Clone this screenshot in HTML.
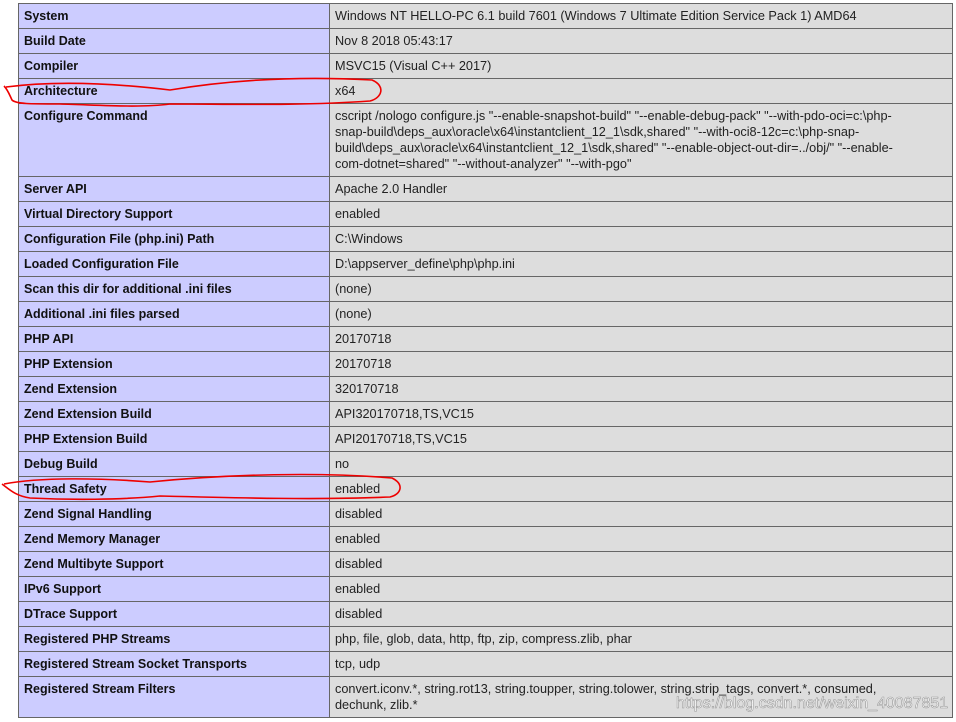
<!DOCTYPE html>
<html><head><meta charset="utf-8"><style>
body{margin:0;background:#fff;width:956px;height:722px;position:relative;overflow:hidden;font-family:"Liberation Sans","Noto Sans CJK SC",sans-serif;font-size:12.5px;color:#222}
table{position:absolute;left:18px;top:3px;width:935px;border-collapse:collapse}
td{border:1px solid #666;padding:0 5px;height:24px;line-height:16px;vertical-align:middle}
td.e{background:#ccf;font-weight:bold;width:300px;color:#111}
td.v{background:#ddd;font-size:12.7px;white-space:nowrap}
tr.t td{vertical-align:top;padding-top:4px;padding-bottom:4px;height:auto}
</style></head><body>
<table>
<tr><td class="e">System</td><td class="v">Windows NT HELLO-PC 6.1 build 7601 (Windows 7 Ultimate Edition Service Pack 1) AMD64</td></tr>
<tr><td class="e">Build Date</td><td class="v">Nov 8 2018 05:43:17</td></tr>
<tr><td class="e">Compiler</td><td class="v">MSVC15 (Visual C++ 2017)</td></tr>
<tr><td class="e">Architecture</td><td class="v">x64</td></tr>
<tr class="t"><td class="e" style="height:64px">Configure Command</td><td class="v">cscript /nologo configure.js "--enable-snapshot-build" "--enable-debug-pack" "--with-pdo-oci=c:\php-<br>snap-build\deps_aux\oracle\x64\instantclient_12_1\sdk,shared" "--with-oci8-12c=c:\php-snap-<br>build\deps_aux\oracle\x64\instantclient_12_1\sdk,shared" "--enable-object-out-dir=../obj/" "--enable-<br>com-dotnet=shared" "--without-analyzer" "--with-pgo"</td></tr>
<tr><td class="e">Server API</td><td class="v">Apache 2.0 Handler</td></tr>
<tr><td class="e">Virtual Directory Support</td><td class="v">enabled</td></tr>
<tr><td class="e">Configuration File (php.ini) Path</td><td class="v">C:\Windows</td></tr>
<tr><td class="e">Loaded Configuration File</td><td class="v">D:\appserver_define\php\php.ini</td></tr>
<tr><td class="e">Scan this dir for additional .ini files</td><td class="v">(none)</td></tr>
<tr><td class="e">Additional .ini files parsed</td><td class="v">(none)</td></tr>
<tr><td class="e">PHP API</td><td class="v">20170718</td></tr>
<tr><td class="e">PHP Extension</td><td class="v">20170718</td></tr>
<tr><td class="e">Zend Extension</td><td class="v">320170718</td></tr>
<tr><td class="e">Zend Extension Build</td><td class="v">API320170718,TS,VC15</td></tr>
<tr><td class="e">PHP Extension Build</td><td class="v">API20170718,TS,VC15</td></tr>
<tr><td class="e">Debug Build</td><td class="v">no</td></tr>
<tr><td class="e">Thread Safety</td><td class="v">enabled</td></tr>
<tr><td class="e">Zend Signal Handling</td><td class="v">disabled</td></tr>
<tr><td class="e">Zend Memory Manager</td><td class="v">enabled</td></tr>
<tr><td class="e">Zend Multibyte Support</td><td class="v">disabled</td></tr>
<tr><td class="e">IPv6 Support</td><td class="v">enabled</td></tr>
<tr><td class="e">DTrace Support</td><td class="v">disabled</td></tr>
<tr><td class="e">Registered PHP Streams</td><td class="v">php, file, glob, data, http, ftp, zip, compress.zlib, phar</td></tr>
<tr><td class="e">Registered Stream Socket Transports</td><td class="v">tcp, udp</td></tr>
<tr class="t"><td class="e" style="height:32px">Registered Stream Filters</td><td class="v">convert.iconv.*, string.rot13, string.toupper, string.tolower, string.strip_tags, convert.*, consumed,<br>dechunk, zlib.*</td></tr>
</table>
<svg style="position:absolute;left:0;top:0" width="956" height="722">
<path d="M6,87 C60,80 120,84 170,90 C230,80 300,76 372,80 C386,86 382,98 370,101 C300,106 230,104 170,104 C140,108 100,105 60,104 C30,104 16,104 12,100 C10,96 8,90 4,86" fill="none" stroke="#e00" stroke-width="1.6"/>
<path d="M4,484 C40,477 100,478 150,482 C230,474 320,472 392,478 C404,484 402,494 390,497 C320,500 240,498 160,496 C120,500 70,500 30,498 C16,496 10,490 2,484" fill="none" stroke="#e00" stroke-width="1.6"/>
<text x="676" y="708" font-family="Liberation Sans, sans-serif" font-size="16" fill="#fff" stroke="#999" stroke-width="0.6">https://blog.csdn.net/weixin_40087851</text>
</svg>
</body></html>
